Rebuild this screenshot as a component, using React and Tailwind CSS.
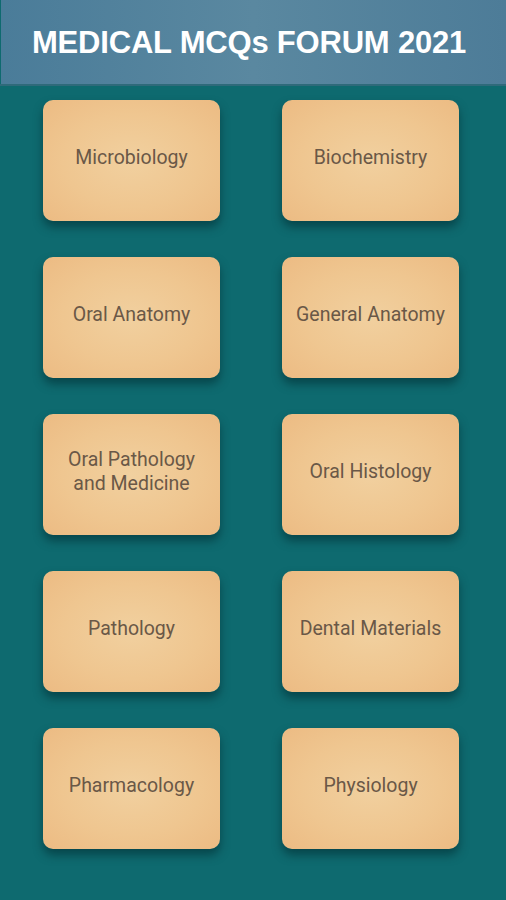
const subjects = [
  "Microbiology",
  "Biochemistry",
  "Oral Anatomy",
  "General Anatomy",
  "Oral Pathology and Medicine",
  "Oral Histology",
  "Pathology",
  "Dental Materials",
  "Pharmacology",
  "Physiology",
];

export default function App() {
  return (
    <div className="min-h-[900px] bg-[#0e6a6f]">
      <header className="h-[86px] bg-gradient-to-r from-[#4a7c99] via-[#5a88a0] to-[#4d7c98] border-b-2 border-[#2f6a7a] flex items-center pl-[32px] shadow-[inset_1px_0_0_#0e6a6f]">
        <h1 className="text-white font-bold text-[31px] tracking-[-0.2px] font-['Liberation_Sans',Arial,sans-serif] leading-none pt-[1px]">
          MEDICAL MCQs FORUM 2021
        </h1>
      </header>
      <div className="grid grid-cols-[177px_177px] gap-x-[62px] gap-y-[36px] pl-[43px] pt-[14px] pb-[48px]">
        {subjects.map((s) => (
          <button
            key={s}
            className="h-[121px] rounded-[10px] bg-[radial-gradient(ellipse_at_center,#f1d09f_0%,#efc690_55%,#ecbb83_100%)] shadow-[0_6px_10px_rgba(0,40,45,0.55)] flex items-center justify-center px-3 pb-[6px] text-center text-[19.5px] leading-[24px] text-[#6a5847] font-['Roboto',sans-serif]"
          >
            {s}
          </button>
        ))}
      </div>
    </div>
  );
}
